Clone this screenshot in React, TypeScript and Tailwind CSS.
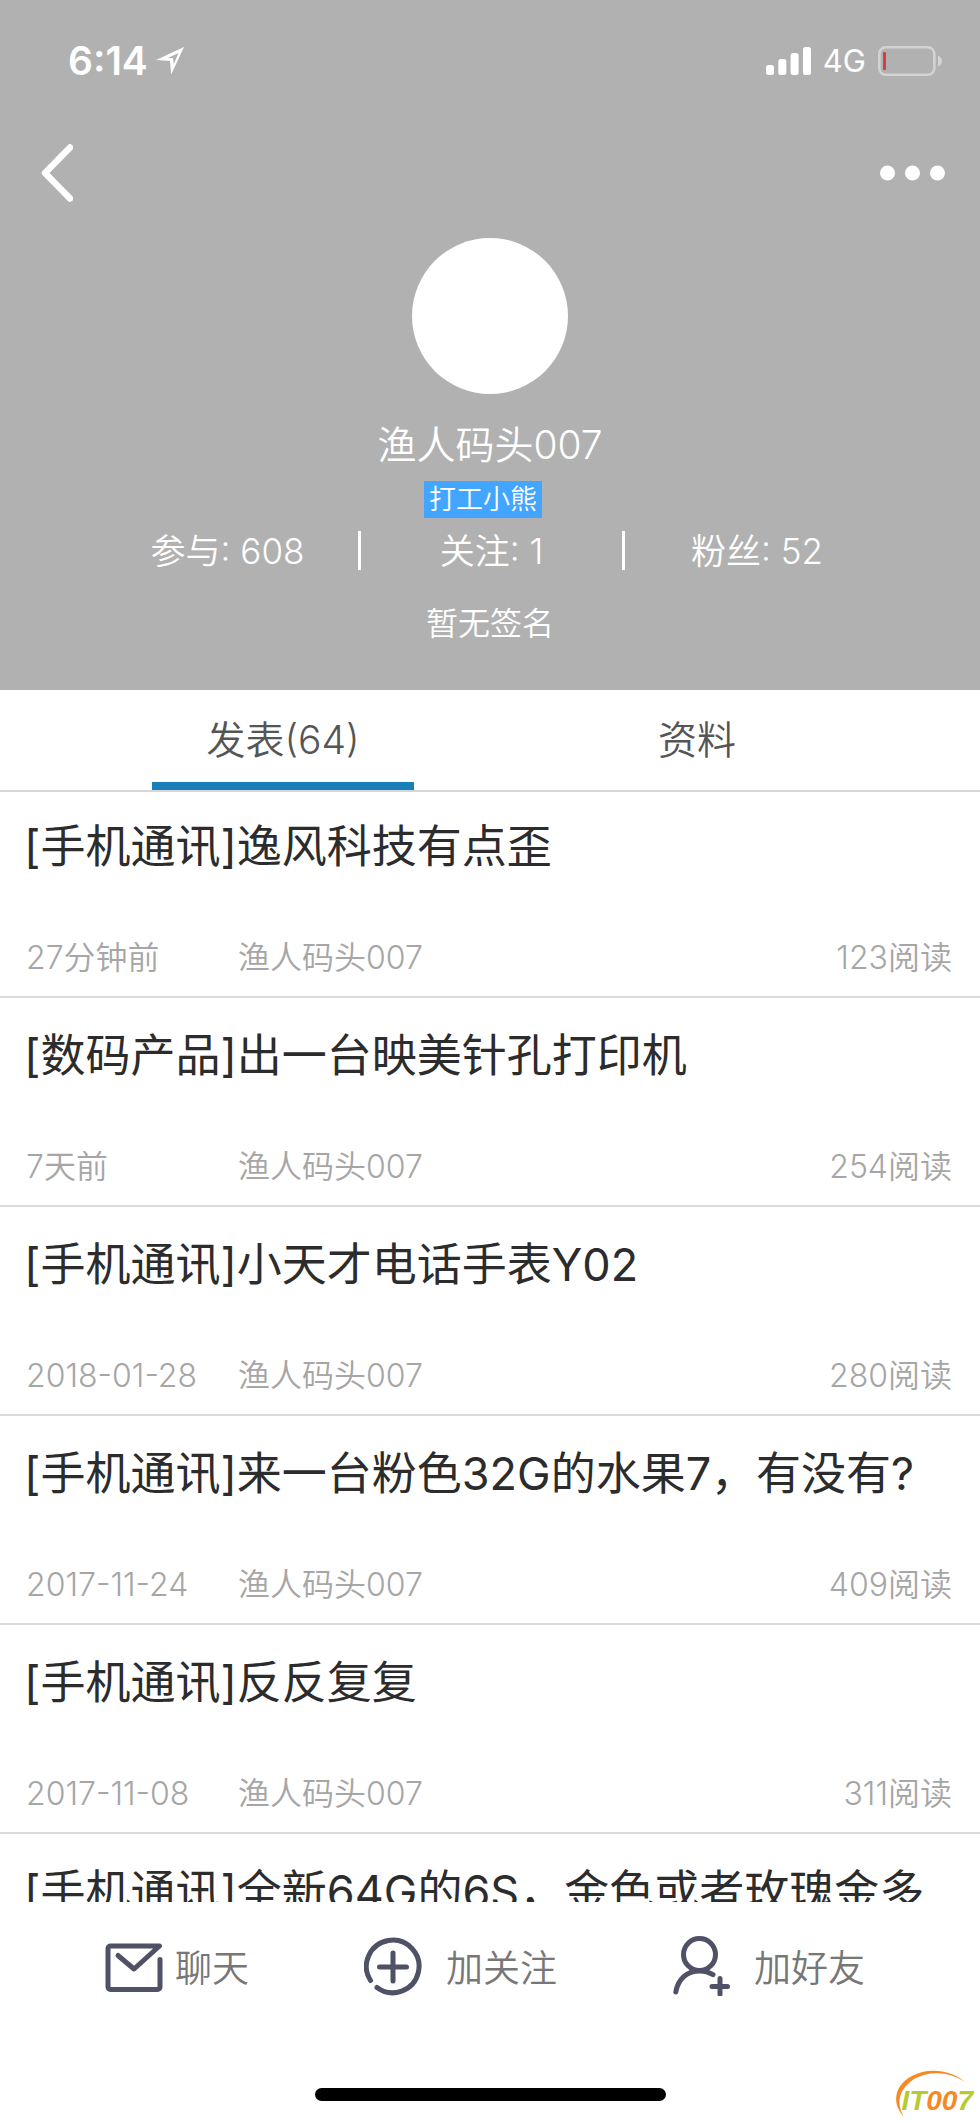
/**
 * User profile page: grey cover, tab bar, list of posts and bottom actions
 */

const posts = [
  { id: 1, title: '[手机通讯]逸风科技有点歪', date: '27分钟前', author: '渔人码头007', reads: 123 },
  { id: 2, title: '[数码产品]出一台映美针孔打印机', date: '7天前', author: '渔人码头007', reads: 254 },
  { id: 3, title: '[手机通讯]小天才电话手表Y02', date: '2018-01-28', author: '渔人码头007', reads: 280 },
  { id: 4, title: '[手机通讯]来一台粉色32G的水果7，有没有?', date: '2017-11-24', author: '渔人码头007', reads: 409 },
  { id: 5, title: '[手机通讯]反反复复', date: '2017-11-08', author: '渔人码头007', reads: 311 },
  { id: 6, title: '[手机通讯]全新64G的6S，金色或者玫瑰金多' },
];

const stats = [
  { label: '参与', value: 608 },
  { label: '关注', value: 1 },
  { label: '粉丝', value: 52 },
];

function StatusBar() {
  return (
    <div className="flex h-[122px] items-center justify-between pl-[68px] pr-[38px]">
      <div className="flex items-center gap-2">
        <span className="text-[39px] font-semibold leading-[48px]">6:14</span>
        <svg className="h-7 w-7" viewBox="0 0 28 28" fill="currentColor">
          <path
            fillRule="evenodd"
            d="M0 13 28 0 15.200 27.500 14 14ZM12 11 17 11.200 17.800 17 22.500 6Z"
          />
        </svg>
      </div>
      <div className="flex items-center gap-3">
        <svg className="h-7 w-[45px]" viewBox="0 0 45 28" fill="currentColor">
          <rect x="0" y="18" width="8" height="10" rx="2.5" />
          <rect x="12.3" y="12" width="8" height="16" rx="2.5" />
          <rect x="24.6" y="6" width="8" height="22" rx="2.5" />
          <rect x="37" y="0" width="8" height="28" rx="2.5" />
        </svg>
        <span className="text-[31px] leading-[40px]">4G</span>
        <svg className="h-[30px] w-16" viewBox="0 0 64 30" fill="none">
          <rect x="1.3" y="1.3" width="55" height="27.4" rx="6.5" stroke="#d3d3d3" strokeWidth="2.6" />
          <rect x="5" y="6" width="3" height="18" rx="1" fill="#d83b40" />
          <path d="M60 9.5c2.600 1 4 3 4 5.500s-1.400 4.500-4 5.500z" fill="#d3d3d3" />
        </svg>
      </div>
    </div>
  );
}

function ProfileHeader() {
  return (
    <header className="bg-[#b1b1b1] pb-[46px] text-white">
      <StatusBar />
      <nav className="flex h-[102px] items-center justify-between pl-[41px] pr-[35px]">
        <button type="button" aria-label="返回">
          <svg className="h-[58px] w-8" viewBox="0 0 32 58" fill="none">
            <path
              d="M29 3.500 4 29l25 25.500"
              stroke="currentColor"
              strokeWidth="6.500"
              strokeLinecap="round"
              strokeLinejoin="round"
            />
          </svg>
        </button>
        <button type="button" aria-label="更多">
          <svg className="h-4 w-[65px]" viewBox="0 0 65 16" fill="currentColor">
            <circle cx="7.5" cy="8" r="7.5" />
            <circle cx="32.500" cy="8" r="7.5" />
            <circle cx="57.500" cy="8" r="7.5" />
          </svg>
        </button>
      </nav>
      <div className="flex flex-col items-center">
        <div className="mt-[14px] h-[156px] w-[156px] rounded-full bg-white" />
        <h1 className="mt-[27px] text-[39px] font-[350] leading-[48px]">渔人码头007</h1>
        <div className="mt-3 pr-[14px]">
          <span className="block bg-[#42a5ff] px-[5px] text-[27px] font-[350] leading-[37px]">打工小熊</span>
        </div>
      </div>
      <ul className="mt-[13px] grid grid-cols-3 divide-x-3 divide-white pl-[97px] pr-[91px]">
        {stats.map((item) => (
          <li key={item.label} className="pt-0.5 text-center text-[35px] font-[350] leading-[37px]">
            {item.label}: {item.value}
          </li>
        ))}
      </ul>
      <p className="mt-[34px] text-center text-[32px] font-[350] leading-[40px]">暂无签名</p>
    </header>
  );
}

function Tabs() {
  return (
    <div role="tablist" className="border-b-2 border-[#d6d6d6] px-[76px]">
      <div className="grid h-[100px] grid-cols-2 text-[39px] font-[350] text-[#555]">
        <button type="button" role="tab" aria-selected="true" className="flex flex-col items-center pt-2">
          <span className="leading-[84px]">发表(64)</span>
          <span className="h-2 w-[262px] bg-[#197fb8]" />
        </button>
        <button type="button" role="tab" aria-selected="false" className="flex flex-col items-center pt-2">
          <span className="leading-[84px]">资料</span>
        </button>
      </div>
    </div>
  );
}

function MailIcon() {
  return (
    <svg className="h-[60px] w-[58px]" viewBox="0 0 58 60" fill="none" stroke="#4f5166" strokeWidth="5" strokeLinecap="round" strokeLinejoin="round">
      <path d="M55 23.500v27.500a2.500 2.500 0 0 1-2.500 2.500h-47A2.500 2.500 0 0 1 3 51V12.500A2.500 2.500 0 0 1 5.500 10H54.500L29 33 13 19.500" />
    </svg>
  );
}

function PlusIcon() {
  return (
    <svg className="h-[60px] w-[58px]" viewBox="0 0 58 60" fill="none" stroke="#4f5166" strokeWidth="5" strokeLinecap="round">
      <path d="M6.500 44.500A26.300 26.300 0 1 1 13 51.500" />
      <path d="M29 17v28M15.500 31h27" />
    </svg>
  );
}

function AddUserIcon() {
  return (
    <svg className="h-[60px] w-[58px]" viewBox="0 0 58 60" fill="none" stroke="#4f5166" strokeWidth="5" strokeLinecap="round">
      <circle cx="27.500" cy="18.500" r="16" />
      <path d="M3.800 56C6 43 15 35 27.500 35c5 0 9.500 1.300 13.500 3.700" />
      <path d="M48 42.500v16M40 50.500h15.500" />
    </svg>
  );
}

function SiteLogo() {
  return (
    <a href="#" className="absolute bottom-0 right-1 flex h-[53px] w-[82px] items-end justify-end pb-[7px] pr-[3px]">
      <svg className="absolute inset-0 h-[53px] w-[82px]" viewBox="0 0 82 53" fill="#f58a25">
        <path d="M71 12C58 0 34-3 18 6 2 14-4 32 10 47 2 34 4 20 20 9 36 0 56 2 71 12Z" />
      </svg>
      <span className="relative font-[Liberation_Sans] text-[28px] font-bold italic leading-[30px] text-[#b5cb30]">
        IT<span className="text-[#f58a25]">00</span>7
      </span>
    </a>
  );
}

export default function App() {
  return (
    <div className="flex h-screen flex-col bg-white font-['Inter','Noto_Sans_CJK_SC',sans-serif]">
      <div className="shrink-0">
        <ProfileHeader />
        <Tabs />
      </div>

      <main className="min-h-0 flex-1 overflow-hidden">
        <ul>
          {posts.map((post) => (
            <li key={post.id} className="border-b-2 border-[#dadada] pb-4 pl-6 pr-7 pt-7 first:pt-[25px]">
              <h2 className="whitespace-nowrap text-[45px] leading-[60px] text-[#2c2c2c]">{post.title}</h2>
              {post.date && (
                <div className="mt-[59px] flex pl-[2px] text-[32px] font-[350] leading-[44px] text-[#a6a6a6]">
                  <span className="w-[212px]">{post.date}</span>
                  <span className="flex-1">{post.author}</span>
                  <span>{post.reads}阅读</span>
                </div>
              )}
            </li>
          ))}
        </ul>
      </main>

      <footer className="relative flex h-[221px] shrink-0 flex-col justify-between bg-white pb-[22px] pt-[34px]">
        <div className="flex justify-between pl-[105px] pr-[115px] text-[37px] font-[350] leading-[66px] text-[#777]">
          <button type="button" className="flex items-start gap-3">
            <MailIcon />
            聊天
          </button>
          <button type="button" className="flex items-start gap-6">
            <PlusIcon />
            加关注
          </button>
          <button type="button" className="flex items-start gap-6">
            <AddUserIcon />
            加好友
          </button>
        </div>
        <div className="mx-auto h-[13px] w-[351px] rounded-full bg-black" />
        <SiteLogo />
      </footer>
    </div>
  );
}
